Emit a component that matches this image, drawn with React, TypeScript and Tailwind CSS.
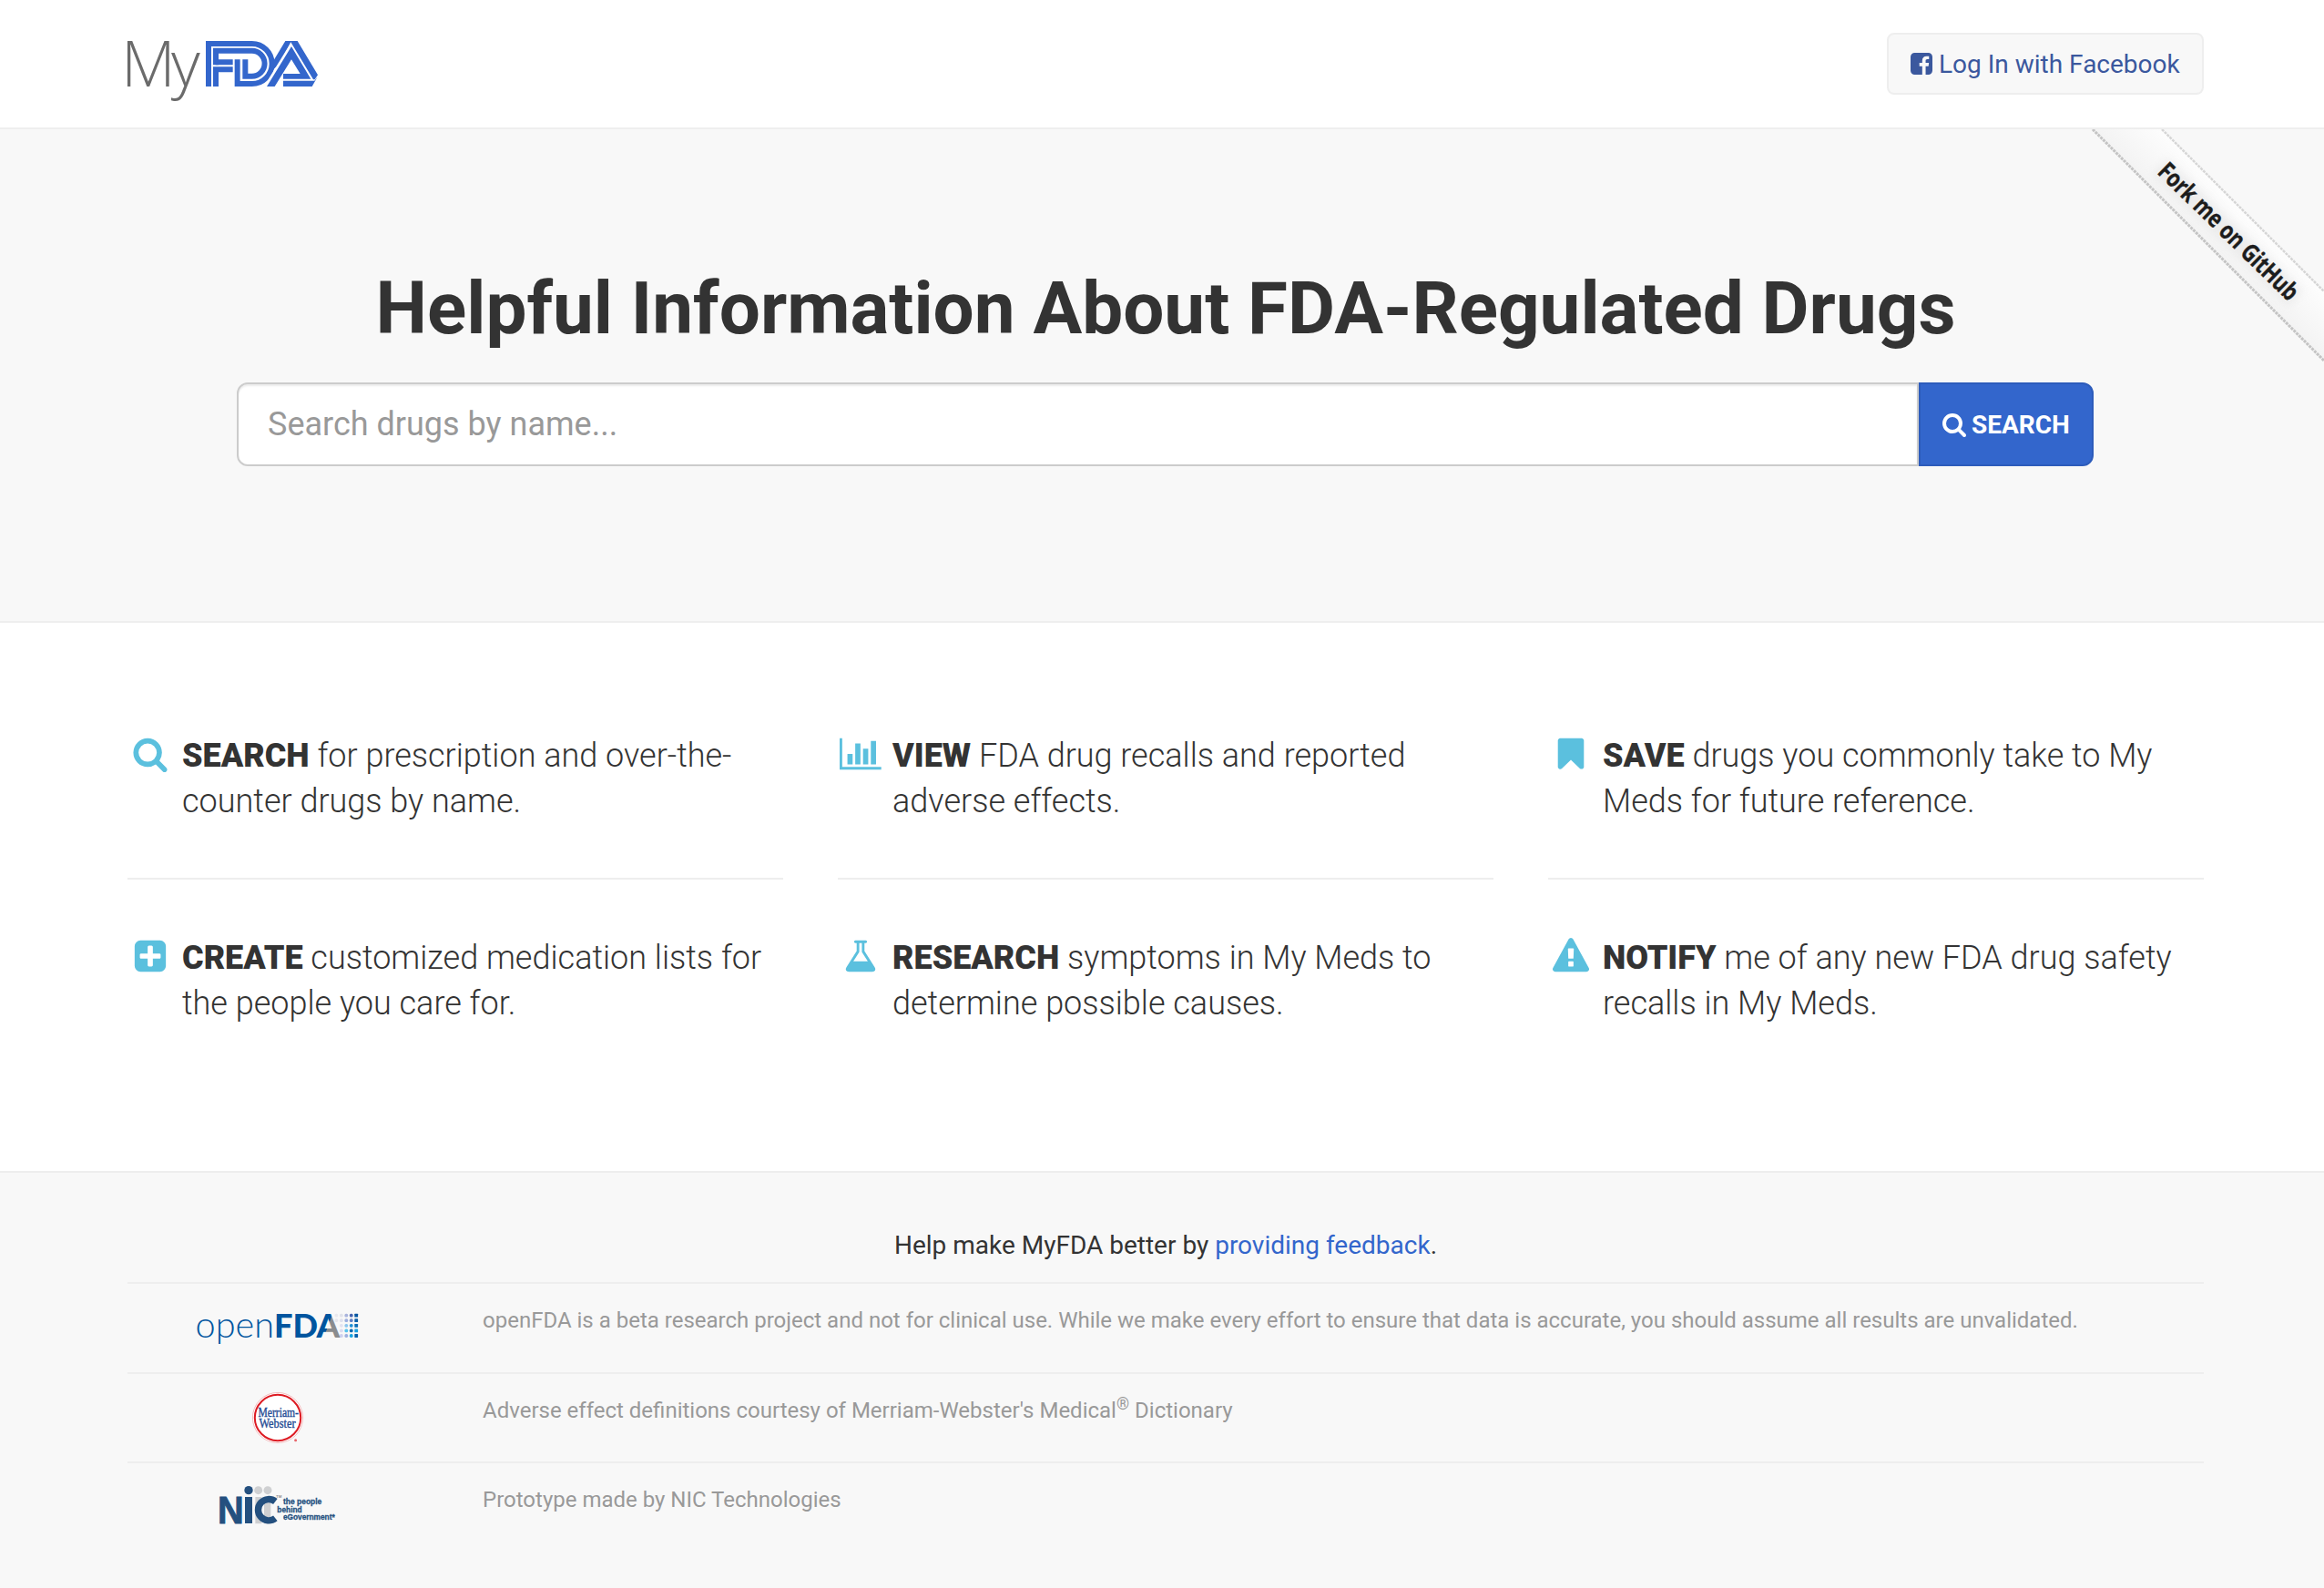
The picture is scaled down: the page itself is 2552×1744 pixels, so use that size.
import type { ReactNode } from "react";

const ICONS = {
  search:
    "M1216 832q0-185-131.5-316.5t-316.5-131.5-316.5 131.5-131.5 316.5 131.5 316.5 316.5 131.5 316.5-131.5 131.5-316.5zm512 832q0 52-38 90t-90 38q-54 0-90-38l-343-342q-179 124-399 124-143 0-273.5-55.5t-225-150-150-225-55.5-273.5 55.5-273.5 150-225 225-150 273.5-55.5 273.5 55.5 225 150 150 225 55.5 273.5q0 220-124 399l343 343q37 37 37 90z",
  facebook:
    "M1376 128q119 0 203.5 84.5t84.5 203.5v960q0 119-84.5 203.5t-203.5 84.5h-188v-595h199l30-232h-229v-148q0-56 23.5-84t91.5-28l122-1v-207q-63-9-178-9-136 0-217.5 80t-81.5 226v171h-200v232h200v595h-532q-119 0-203.5-84.5t-84.5-203.5v-960q0-119 84.5-203.5t203.5-84.5h960z",
  chart:
    "M640 896v512h-256v-512h256zm384-512v1024h-256v-1024h256zm1024 1152v128h-2048v-1536h128v1408h1920zm-640-896v768h-256v-768h256zm384-384v1152h-256v-1152h256z",
  flask:
    "M1591 1448q56 89 21.5 152.5t-140.5 63.5h-1152q-106 0-140.5-63.5t21.5-152.5l503-793v-399h-64q-26 0-45-19t-19-45 19-45 45-19h512q26 0 45 19t19 45-19 45-45 19h-64v399zm-779-725l-272 429h712l-272-429-20-31v-436h-128v436z",
  warning:
    "M1024 1375v-190q0-14-9.5-23.5t-22.5-9.5h-192q-13 0-22.5 9.5t-9.5 23.5v190q0 14 9.5 23.5t22.5 9.5h192q13 0 22.5-9.5t9.5-23.5zm-2-374l18-459q0-12-10-19-13-11-24-11h-220q-11 0-24 11-10 7-10 21l17 457q0 10 10 16.5t24 6.5h185q14 0 23.5-6.5t10.5-16.5zm-14-934l768 1408q35 63-2 126-17 29-46.5 46t-63.5 17h-1536q-34 0-63.5-17t-46.5-46q-37-63-2-126l768-1408q17-31 47-49t65-18 65 18 47 49z",
  bookmark:
    "M1420 128q23 0 44 9 33 13 52.5 41t19.5 62v1289q0 34-19.5 62t-52.5 41q-19 8-44 8-48 0-83-32l-441-424-441 424q-36 33-83 33-23 0-44-9-33-13-52.5-41t-19.5-62v-1289q0-34 19.5-62t52.5-41q21-9 44-9h1048z",
  plus:
    "M1408 960v-128q0-26-19-45t-45-19h-320v-320q0-26-19-45t-45-19h-128q-26 0-45 19t-19 45v320h-320q-26 0-45 19t-19 45v128q0 26 19 45t45 19h320v320q0 26 19 45t45 19h128q26 0 45-19t19-45v-320h320q26 0 45-19t19-45zm256-544v960q0 119-84.5 203.5t-203.5 84.5h-960q-119 0-203.5-84.5t-84.5-203.5v-960q0-119 84.5-203.5t203.5-84.5h960q119 0 203.5 84.5t84.5 203.5z",
};

type IconName = keyof typeof ICONS;

function FeatureIcon({ name }: { name: IconName }) {
  const width = name === "chart" ? 2048 : 1792;
  return (
    <span className="flex w-[50px] shrink-0 justify-center pt-1">
      <svg viewBox={`0 0 ${width} 1792`} className="h-10 shrink-0 fill-[#5bc0de]">
        <path d={ICONS[name]} />
      </svg>
    </span>
  );
}

function MyFdaLogo() {
  return (
    <svg viewBox="0 0 240 100" className="h-[100px] w-60 overflow-visible">
      <text
        x="-7"
        y="61"
        fontSize="70"
        fontWeight="300"
        letterSpacing="-4.6"
        fill="#6b6b6b"
        className="font-['Open_Sans',sans-serif]"
        textLength="82.3"
        lengthAdjust="spacingAndGlyphs"
      >
        My
      </text>
      <g transform="translate(-20 -14) scale(0.33333)">
        <g fill="none" stroke="#3366cc" strokeWidth="18">
          <path d="M327 225V84H470A66 66 0 0 1 470 216H422V136" />
          <path d="M351 154V107.5H470A41.75 41.75 0 0 1 470 191H448V136" />
          <path d="M407 145H350M351 225V169H407" />
        </g>
        <path d="M580 75H600L560 150L520 190L530 158Z" fill="#3366cc" />
        <path d="M600 78L509 226H519L600 94Z" fill="#fff" />
        <path d="M600 93L519 225H545L600 136L629 183H573V200H664Z" fill="#3366cc" />
        <path d="M595 75H620L687 187L677 202H672L598 79Z" fill="#3366cc" />
        <path d="M573 206H676L686 193L668 225H573Z" fill="#3366cc" />
      </g>
    </svg>
  );
}

const DOTS: (string | null)[][] = [
  ["#e9e9ee", "#e0e2ea", "#a9b4dc", "#4463ae", "#0055a0"],
  ["#e6e6ec", "#dfe0ee", "#9daede", "#5f7fc6", "#0a5fa8"],
  [null, "#e2e2ef", "#8cc5ee", "#1f8fd4", "#0b6cb5"],
  [null, "#dcdcf0", "#58c3ee", "#0868b0", "#18a0e0"],
  [null, "#cfd0ee", "#9fb0e0", "#16a5e2", "#0560ac"],
];

function OpenFdaLogo() {
  return (
    <svg viewBox="0 0 180 37" className="mt-[30px] h-[37px] w-[180px] overflow-visible">
      <defs>
        <linearGradient id="a-split" gradientUnits="userSpaceOnUse" x1="144.9" y1="15.9" x2="145.7" y2="16.2">
          <stop offset="0" stopColor="#00559f" />
          <stop offset="1" stopColor="#8a8c8e" />
        </linearGradient>
      </defs>
      {DOTS.map((row, r) =>
        row.map((color, c) =>
          color ? (
            <rect
              key={`${r}-${c}`}
              x={152.5 + c * 5.45}
              y={2.7 + r * 5.6}
              width="3.8"
              height="3.8"
              rx={c === 4 ? 0.6 : 1.6}
              fill={color}
            />
          ) : null,
        ),
      )}
      <g className="font-['Lato',sans-serif]">
        <text x="-0.5" y="29" fontSize="39" fontWeight="300" fill="#00559f" textLength="86.5" lengthAdjust="spacingAndGlyphs">
          open
        </text>
        <text x="86" y="29" fontSize="36.5" fontWeight="900" fill="#00559f" textLength="48" lengthAdjust="spacingAndGlyphs">
          FD
        </text>
        <text x="132.5" y="29" fontSize="36.5" fontWeight="900" fill="url(#a-split)">
          A
        </text>
      </g>
    </svg>
  );
}

function MerriamWebsterLogo() {
  return (
    <svg viewBox="0 0 60 60" className="mt-[18px] h-[60px] w-[60px]">
      <circle cx="30" cy="30" r="27.6" fill="#fff" stroke="#f0a0a4" strokeWidth="0.7" />
      <circle cx="30" cy="30" r="25.2" fill="#fff" stroke="#dd1a22" strokeWidth="2" />
      <g fill="#1f4b94" stroke="#1f4b94" strokeWidth="0.35" className="font-['Liberation_Serif',serif]">
        <text x="8.5" y="28.6" fontSize="14" textLength="44.5" lengthAdjust="spacingAndGlyphs">
          Merriam-
        </text>
        <text x="9.5" y="40.5" fontSize="14" textLength="40" lengthAdjust="spacingAndGlyphs">
          Webster
        </text>
      </g>
      <circle cx="49.6" cy="54.8" r="1.5" fill="#e8666b" />
    </svg>
  );
}

function NicLogo() {
  return (
    <svg viewBox="60 360 390 140" className="mt-[23px] h-[46.67px] w-[130px] overflow-visible">
      <g fill="#cfd0d2">
        <circle cx="191" cy="380" r="13.5" />
        <circle cx="222" cy="380" r="13.5" />
        <path d="M181 402H202V490H181ZM210 402H232V490H210Z" />
      </g>
      <g fill="#24507f">
        <circle cx="159" cy="380" r="14" />
        <path d="M147 402H171V489H147Z" />
      </g>
      <path d="M247 417A35 35 0 1 0 247 472" fill="none" stroke="#24507f" strokeWidth="22" />
      <g fill="#24507f" className="font-['Liberation_Sans',sans-serif]" fontWeight="700">
        <text x="57" y="489" fontSize="125" textLength="86" lengthAdjust="spacingAndGlyphs" stroke="#24507f" strokeWidth="3">
          N
        </text>
        <g fontSize="25" stroke="#24507f" strokeWidth="0.9">
          <text x="273" y="427" textLength="127" lengthAdjust="spacingAndGlyphs">the people</text>
          <text x="253" y="452" textLength="82" lengthAdjust="spacingAndGlyphs">behind</text>
          <text x="273" y="476" textLength="170" lengthAdjust="spacingAndGlyphs">eGovernment*</text>
        </g>
      </g>
      <text x="249" y="404" fontSize="13" fill="#555" className="font-['Liberation_Sans',sans-serif]">
        TM
      </text>
    </svg>
  );
}

function ForkRibbon() {
  return (
    <svg viewBox="0 0 298 298" className="absolute top-0 right-0 h-[298px] w-[298px]">
      <defs>
        <linearGradient id="ribbon" gradientUnits="userSpaceOnUse" x1="120" y1="76" x2="158" y2="38">
          <stop offset="0" stopColor="#f3f3f3" />
          <stop offset="1" stopColor="#fdfdfd" />
        </linearGradient>
        <filter id="glow" x="-20%" y="-100%" width="140%" height="300%">
          <feGaussianBlur stdDeviation="5" />
        </filter>
      </defs>
      <path d="M44 0H120L298 178V254Z" fill="url(#ribbon)" />
      <path d="M44 0L298 254" stroke="#c4c4c4" strokeWidth="3" strokeDasharray="3 1" />
      <path d="M120 0L298 178" stroke="#d6d6d6" strokeWidth="2.5" strokeDasharray="3 1" />
      <g
        transform="translate(114 48) rotate(44.3)"
        fontSize="27"
        fontWeight="700"
        className="font-['Open_Sans',sans-serif]"
      >
        <rect x="-2" y="-20" width="208" height="24" fill="#d8d8d8" opacity="0.35" filter="url(#glow)" />
        <text fill="#1c1c1c" stroke="#1c1c1c" strokeWidth="0.4" textLength="203" lengthAdjust="spacingAndGlyphs">
          Fork me on GitHub
        </text>
      </g>
    </svg>
  );
}

const FEATURES: { icon: IconName; word: string; text: string }[] = [
  { icon: "search", word: "SEARCH", text: "for prescription and over-the-counter drugs by name." },
  { icon: "chart", word: "VIEW", text: "FDA drug recalls and reported adverse effects." },
  { icon: "bookmark", word: "SAVE", text: "drugs you commonly take to My Meds for future reference." },
  { icon: "plus", word: "CREATE", text: "customized medication lists for the people you care for." },
  { icon: "flask", word: "RESEARCH", text: "symptoms in My Meds to determine possible causes." },
  { icon: "warning", word: "NOTIFY", text: "me of any new FDA drug safety recalls in My Meds." },
];

function CreditRow({ logo, className, children }: { logo: ReactNode; className: string; children: ReactNode }) {
  return (
    <div className={`flex gap-[60px] border-t-2 border-[#eee] ${className}`}>
      <div className="flex w-[330px] items-start justify-center">{logo}</div>
      <p className="pt-[23px] text-2xl leading-[34px] text-[#999]">{children}</p>
    </div>
  );
}

export default function App() {
  return (
    <div className="h-[1744px] overflow-hidden bg-white font-['Roboto',sans-serif] text-[28px] leading-10 text-[#333]">
      <header className="h-[142px] border-b-2 border-[#eee]">
        <div className="ml-[140px] flex w-[2280px] items-start justify-between">
          <div className="pt-[34px]">
            <MyFdaLogo />
          </div>
          <button className="mt-9 flex h-[68px] w-[348px] items-center rounded-lg border-2 border-[#eee] bg-[#f8f8f8] pl-[22px] whitespace-nowrap text-[#3b589e]">
            <svg viewBox="0 0 1792 1792" className="mr-[5px] h-7 w-7 fill-current">
              <path d={ICONS.facebook} />
            </svg>
            <span className="pt-0.5">Log In with Facebook</span>
          </button>
        </div>
      </header>

      <section className="relative h-[542px] border-b-2 border-[#eee] bg-[#f8f8f8] pt-[153px]">
        <ForkRibbon />
        <div className="ml-[140px] w-[2280px]">
          <h1 className="mb-[37px] text-center text-[80px] leading-[88px] font-bold whitespace-nowrap">
            Helpful Information About FDA-Regulated Drugs
          </h1>
          <div className="mr-[121px] ml-[120px] flex h-[92px]">
            <input
              className="h-full min-w-0 flex-1 rounded-l-xl border-2 border-[#ccc] bg-white px-8 text-4xl shadow-[inset_0_2px_2px_rgba(0,0,0,0.075)] outline-none placeholder:text-[#999]"
              placeholder="Search drugs by name..."
            />
            <button className="flex w-48 items-center rounded-r-xl border-2 border-[#2d5cbb] bg-[#3366cc] pl-[23px] font-bold text-white">
              <svg viewBox="0 0 1792 1792" className="mr-[5px] h-7 w-7 fill-current">
                <path d={ICONS.search} />
              </svg>
              <span className="pt-0.5">SEARCH</span>
            </button>
          </div>
        </div>
      </section>

      <section className="h-[602px] pt-[60px]">
        <div className="ml-[140px] grid w-[2280px] grid-cols-3 gap-x-[60px]">
          {FEATURES.map((feature, i) => (
            <div
              key={feature.word}
              className={
                i < 3
                  ? "flex h-[222px] gap-2.5 border-b-2 border-[#eee] pt-[60px]"
                  : "flex h-[222px] gap-2.5 pt-[60px]"
              }
            >
              <FeatureIcon name={feature.icon} />
              <p className="pt-px text-4xl leading-[50px] font-light">
                <strong className="font-black">{feature.word}</strong> {feature.text}
              </p>
            </div>
          ))}
        </div>
      </section>

      <footer className="h-[458px] border-t-2 border-[#eee] bg-[#f8f8f8]">
        <div className="ml-[140px] w-[2280px]">
          <p className="h-[120px] pt-[60px] text-center">
            Help make MyFDA better by <a className="text-[#3366cc]">providing feedback</a>.
          </p>
          <CreditRow logo={<OpenFdaLogo />} className="h-[99px]">
            openFDA is a beta research project and not for clinical use. While we make every effort to ensure that data
            is accurate, you should assume all results are unvalidated.
          </CreditRow>
          <CreditRow logo={<MerriamWebsterLogo />} className="h-[98px]">
            Adverse effect definitions courtesy of Merriam-Webster's Medical
            <sup className="relative -top-[0.5em] align-baseline text-[75%] leading-none">®</sup> Dictionary
          </CreditRow>
          <CreditRow logo={<NicLogo />} className="h-[120px]">
            Prototype made by NIC Technologies
          </CreditRow>
        </div>
      </footer>
    </div>
  );
}
